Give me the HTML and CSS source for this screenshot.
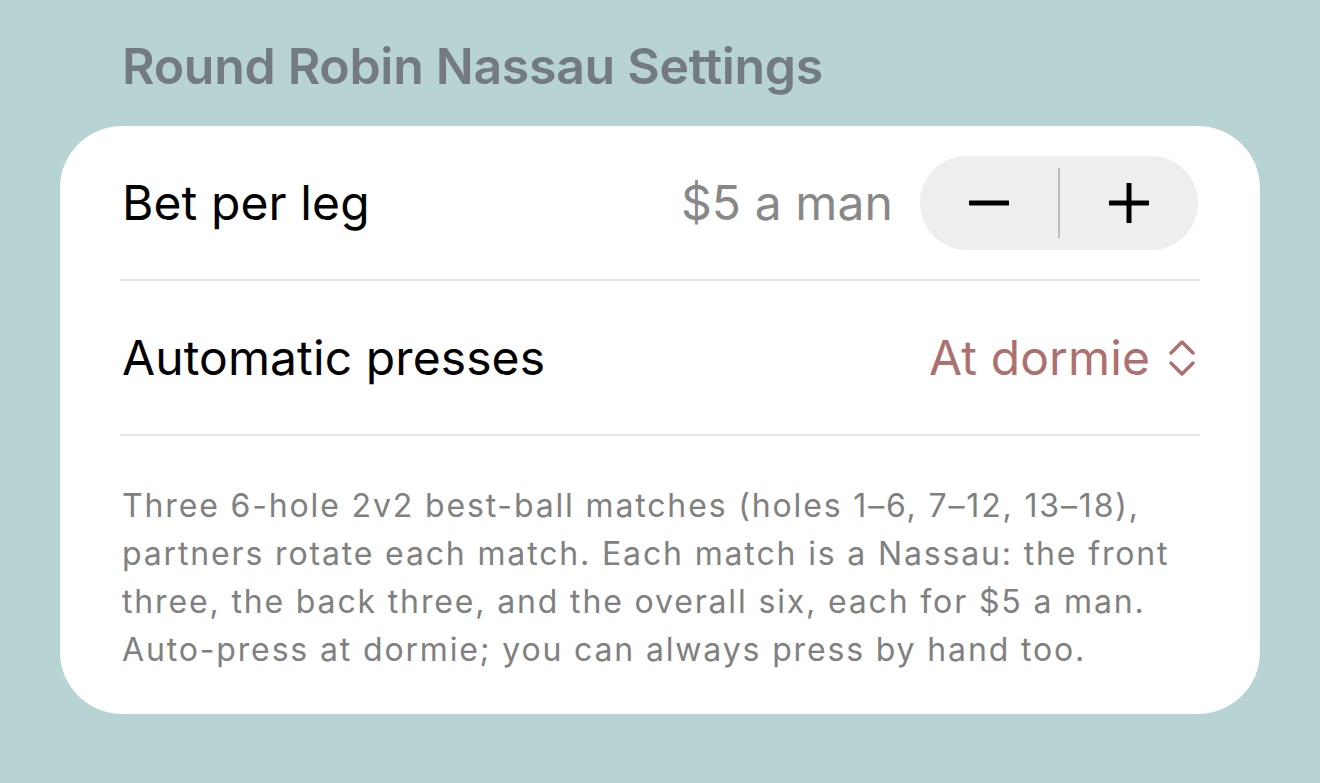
FILE: index.html
```html
<!DOCTYPE html>
<html lang="en">
<head>
    <meta charset="UTF-8">
    <meta name="viewport" content="width=device-width, initial-scale=1.0">
    <title>Round Robin Nassau Settings</title>
    <link rel="stylesheet" href="styles.css">
</head>
<body>
    <div class="page">
        <h1 class="title">Round Robin Nassau Settings</h1>
        <div class="card">
            <div class="row">
                <span class="label">Bet per leg</span>
                <div class="row-right">
                    <span class="value">$5 a man</span>
                    <div class="stepper">
                        <button class="step" aria-label="Decrease">
                            <svg width="40" height="40" viewBox="0 0 40 40"><path d="M1 20H39" stroke="#000" stroke-width="5" stroke-linecap="round"/></svg>
                        </button>
                        <span class="step-sep"></span>
                        <button class="step" aria-label="Increase">
                            <svg width="40" height="40" viewBox="0 0 40 40"><path d="M1 20H39M20 1V39" stroke="#000" stroke-width="5" stroke-linecap="round"/></svg>
                        </button>
                    </div>
                </div>
            </div>
            <div class="row">
                <span class="label">Automatic presses</span>
                <div class="picker">
                    <span>At dormie</span>
                    <svg width="28" height="38" viewBox="0 0 28 38"><path d="M3 14L14 3L25 14M3 24L14 35L25 24" fill="none" stroke="#ad7070" stroke-width="3.5" stroke-linecap="round" stroke-linejoin="round"/></svg>
                </div>
            </div>
            <p class="note">Three 6-hole 2v2 best-ball matches (holes 1–6, 7–12, 13–18),<br>
                partners rotate each match. Each match is a Nassau: the front<br>
                three, the back three, and the overall six, each for $5 a man.<br>
                Auto-press at dormie; you can always press by hand too.</p>
        </div>
    </div>
</body>
</html>
```

FILE: styles.css
```css
*{padding:0;margin:0;box-sizing:border-box}
html,body{height:100%}
body{
    background:#b8d3d4;
    font-family:Inter,"Noto Sans",sans-serif;
}
.page{
    padding:36px 60px 0;
}
.title{
    font-size:50px;
    line-height:60px;
    font-weight:600;
    color:#737b80;
    padding-left:62px;
    margin-bottom:30px;
    letter-spacing:-0.3px;
}
.card{
    background:#fff;
    border-radius:62px;
    padding:0 60px;
}
.row{
    height:155px;
    display:flex;
    align-items:center;
    justify-content:space-between;
    border-bottom:2px solid #e6e6e6;
}
.label{
    font-size:48px;
    color:#000;
    padding-left:2px;
    letter-spacing:0.1px;
}
.row-right{
    display:flex;
    align-items:center;
    gap:27px;
    margin-right:2px;
}
.value{
    font-size:48px;
    color:#888;
    letter-spacing:0.1px;
}
.stepper{
    width:278px;
    height:94px;
    border-radius:47px;
    background:#eeeeee;
    display:flex;
    align-items:center;
}
.step{
    flex:1;
    height:100%;
    border:none;
    background:none;
    display:flex;
    align-items:center;
    justify-content:center;
}
.step-sep{
    width:2px;
    height:70px;
    background:#bcbcbc;
}
.picker{
    display:flex;
    align-items:center;
    gap:18px;
    margin-right:4px;
    font-size:48px;
    color:#ad7070;
    letter-spacing:0.1px;
}
.note{
    padding:46px 0 40px 2px;
    font-size:32px;
    line-height:48px;
    color:#808080;
    letter-spacing:1.85px;
    white-space:nowrap;
}
```
